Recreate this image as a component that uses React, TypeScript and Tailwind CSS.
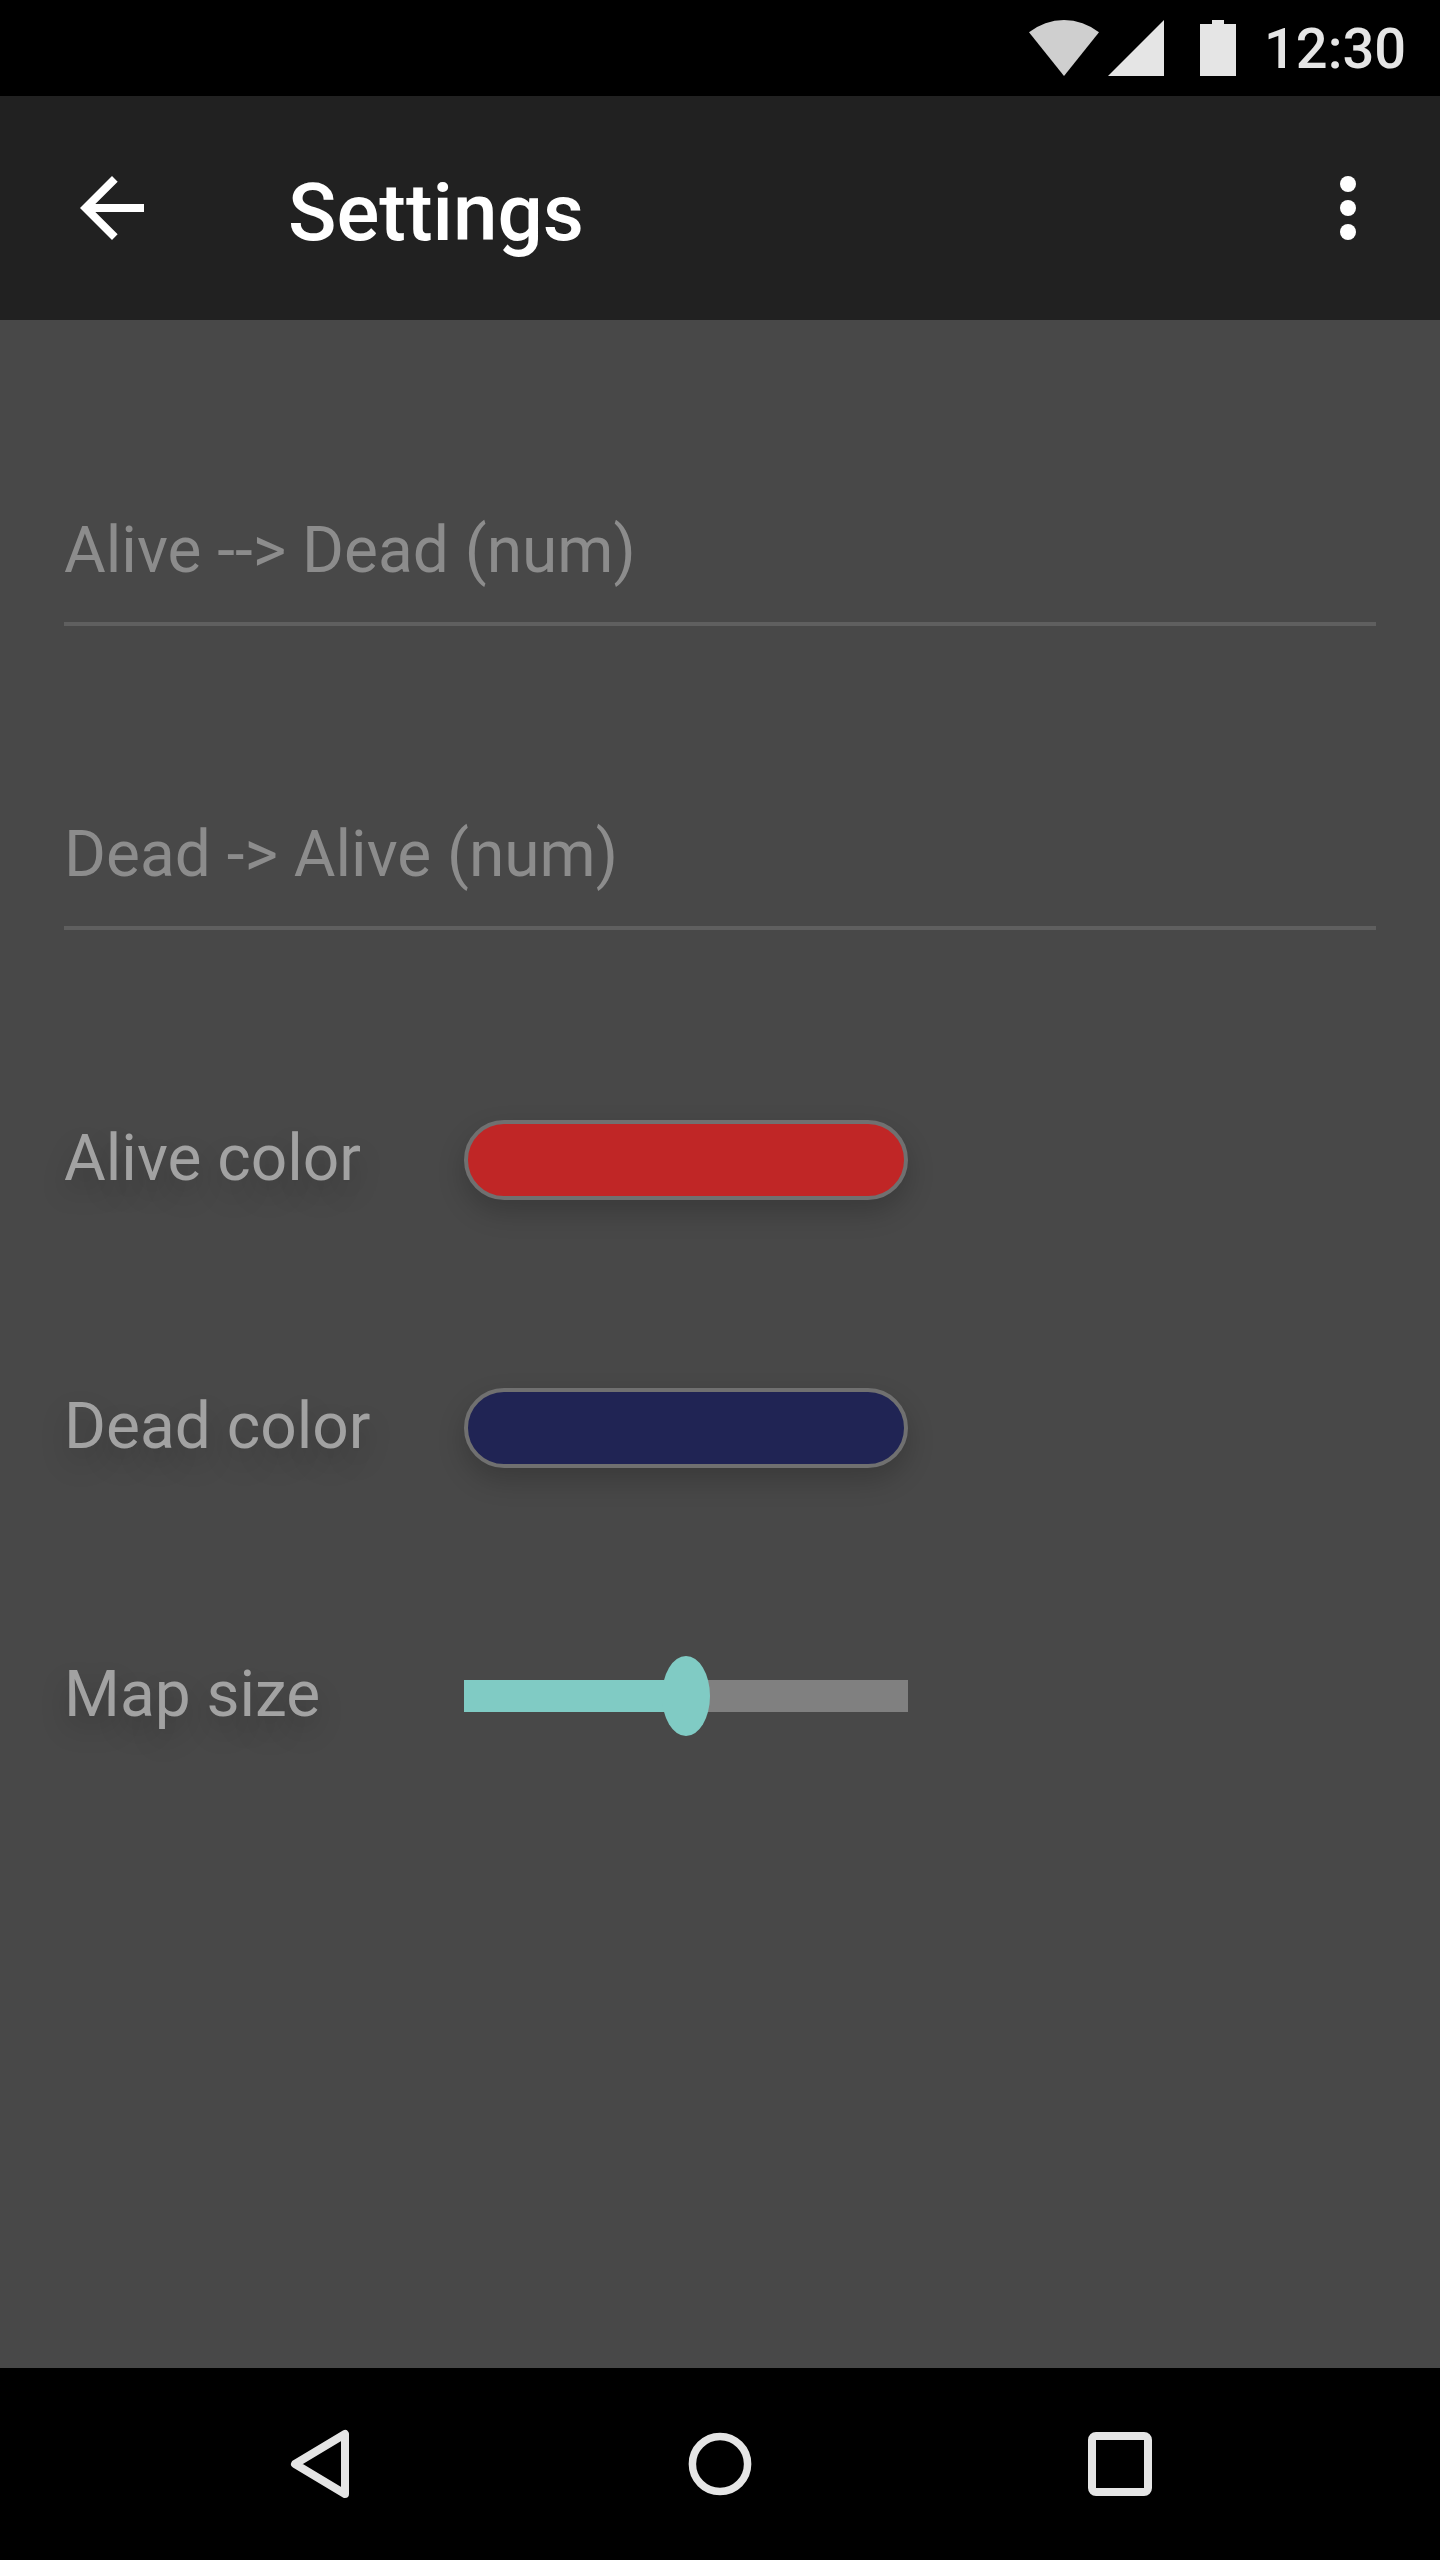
import React from "react";

function StatusBar() {
  return (
    <header className="flex h-24 items-center justify-end bg-black pr-9 text-[#e5e5e5]">
      <svg className="h-14 w-[70px]" viewBox="0 0 70 56">
        <path d="M35 56 0 12.3A56 56 0 0 1 70 12.3Z" fill="#cfcfcf" />
      </svg>
      <svg className="ml-[9px] h-14 w-14" viewBox="0 0 56 56">
        <path d="M0 56 56 0V56Z" fill="currentColor" />
      </svg>
      <svg className="ml-9 h-14 w-9" viewBox="0 0 36 56">
        <path d="M12 0H24V4H36V56H0V4H12Z" fill="currentColor" />
      </svg>
      <span className="ml-7 w-[140px] pt-0.5 whitespace-nowrap text-[56px] leading-[64px] font-medium">
        12:30
      </span>
    </header>
  );
}

function AppBar() {
  return (
    <div className="flex h-56 items-center bg-[#212121] pr-11 pl-16 text-white">
      <button className="h-24 w-24" aria-label="Back">
        <svg className="h-24 w-24" viewBox="0 0 24 24">
          <path d="M20 11H7.83l5.59-5.59L12 4l-8 8 8 8 1.41-1.41L7.83 13H20v-2z" fill="currentColor" />
        </svg>
      </button>
      <h1 className="ml-32 pt-2.5 text-[80px] leading-[96px] font-medium">Settings</h1>
      <button className="ml-auto h-24 w-24" aria-label="More options">
        <svg className="h-24 w-24" viewBox="0 0 24 24" fill="currentColor">
          <circle cx="12" cy="6" r="2" />
          <circle cx="12" cy="12" r="2" />
          <circle cx="12" cy="18" r="2" />
        </svg>
      </button>
    </div>
  );
}

function TextField({ label }: { label: string }) {
  return (
    <div className="h-[108px] border-b-4 border-[#5f5f5f] pt-px text-[64px] leading-[64px] text-[#8c8c8c]">
      {label}
    </div>
  );
}

function Row({ label, children }: { label: string; children: React.ReactNode }) {
  return (
    <div className="flex h-20 items-center">
      <span className="w-[400px] pb-[3px] text-[64px] leading-[75px] whitespace-nowrap text-[#a2a2a2] [text-shadow:0_14px_28px_rgba(0,0,0,0.22)]">
        {label}
      </span>
      {children}
    </div>
  );
}

const swatch =
  "h-20 w-[444px] rounded-full border-4 border-[#707070] shadow-[0_12px_28px_rgba(0,0,0,0.2)]";

export default function App() {
  return (
    <div className="flex h-[2560px] w-[1440px] flex-col bg-[#484848] font-['Roboto',sans-serif]">
      <StatusBar />
      <AppBar />
      <main className="flex flex-1 flex-col px-16 pt-[198px]">
        <TextField label="Alive --> Dead (num)" />
        <div className="mt-[196px]">
          <TextField label="Dead -> Alive (num)" />
        </div>
        <div className="mt-[190px] flex flex-col gap-[188px]">
          <Row label="Alive color">
            <div className={`${swatch} bg-[#c02626]`} />
          </Row>
          <Row label="Dead color">
            <div className={`${swatch} bg-[#202454]`} />
          </Row>
          <Row label="Map size">
            <div className="relative flex h-20 w-[444px] items-center">
              <div className="h-8 w-1/2 bg-[#80cbc4]" />
              <div className="h-8 w-1/2 bg-[#808080]" />
              <div className="absolute left-1/2 h-20 w-12 -translate-x-1/2 rounded-[50%] bg-[#80cbc4]" />
            </div>
          </Row>
        </div>
      </main>
      <nav className="flex h-48 items-center justify-center gap-[304px] bg-black text-[#e5e5e5]">
        <svg className="h-24 w-24" viewBox="0 0 96 96" fill="none" stroke="currentColor" strokeWidth="8" strokeLinejoin="round">
          <path d="M73 18V78L23 48Z" />
        </svg>
        <svg className="h-24 w-24" viewBox="0 0 96 96" fill="none" stroke="currentColor" strokeWidth="7.5">
          <circle cx="48" cy="48" r="27.6" />
        </svg>
        <svg className="h-24 w-24" viewBox="0 0 96 96" fill="none" stroke="currentColor" strokeWidth="8">
          <rect x="20" y="20" width="56" height="56" rx="4" />
        </svg>
      </nav>
    </div>
  );
}
